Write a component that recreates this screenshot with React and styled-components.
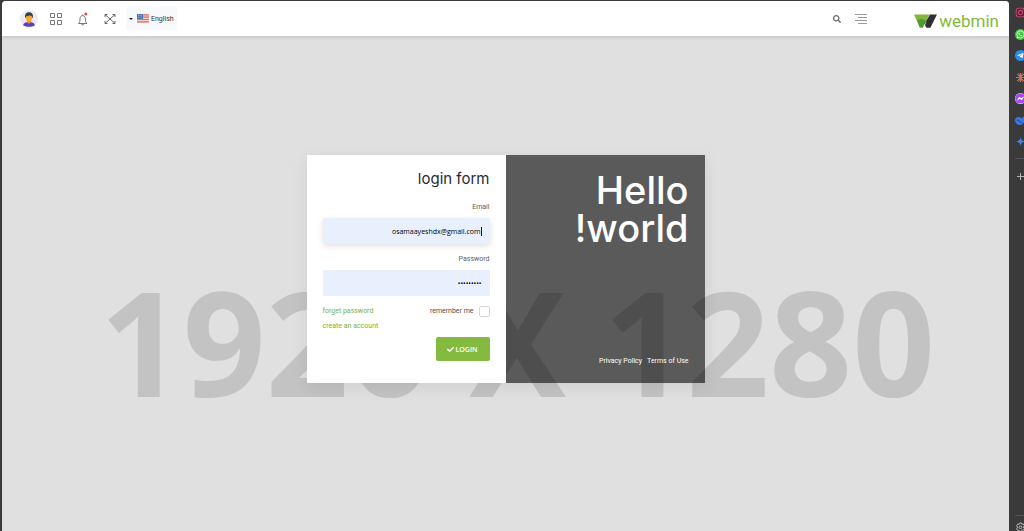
import React from "react";
import styled, { createGlobalStyle } from "styled-components";
import { FaSearch, FaCheck, FaWhatsapp, FaTelegramPlane, FaInstagram, FaFacebookMessenger } from "react-icons/fa";

const compact = "Roboto, sans-serif";

const GlobalStyle = createGlobalStyle`
  *, *::before, *::after { box-sizing: border-box; }
  body { margin: 0; background: #3a3a3a; font-family: "Open Sans", "Noto Sans", sans-serif; }
  button, input { font-family: inherit; }
  a { text-decoration: none; }
`;

const Frame = styled.div`
  display: flex;
  min-height: 100vh;
  padding: 1px 0 0 2px;
  overflow: hidden;
`;

const Page = styled.div`
  flex: 1;
  min-width: 0;
  display: flex;
  flex-direction: column;
  border-radius: 4px 4px 0 0;
  overflow: hidden;
  background: #e0e0e0;
`;

const Header = styled.header`
  display: flex;
  align-items: center;
  justify-content: space-between;
  height: 35px;
  padding: 0 10px 0 18px;
  background: #fff;
  box-shadow: 0 1px 4px rgba(0, 0, 0, 0.16);
  z-index: 1;
`;

const Group = styled.div`
  display: flex;
  align-items: center;
  gap: ${(p) => p.$gap}px;
`;

const IconButton = styled.button`
  display: flex;
  align-items: center;
  justify-content: center;
  width: ${(p) => p.$size || 12}px;
  height: 18px;
  padding: 0;
  border: 0;
  background: none;
  color: #666;
`;

const LanguageButton = styled.button`
  display: flex;
  align-items: center;
  gap: 2px;
  height: 23px;
  padding: 0 3px;
  border: 0;
  background: #f8f9fa;
  color: #333;
  font-family: ${compact};
  font-size: 7px;
`;

const Caret = styled.span`
  margin-right: 2px;
  border: 2px solid transparent;
  border-top-color: #222;
  border-bottom: 0;
`;

const Brand = styled.a`
  display: flex;
  align-items: center;
  gap: 2px;
  margin-left: 47px;
  padding-top: 4px;
  color: #7fba3c;
  font-family: ${compact};
  font-size: 17px;
  line-height: 20px;
`;

const Stage = styled.main`
  flex: 1;
  display: grid;
  grid-template-columns: 1fr;
  justify-items: center;
  align-items: start;
  padding-top: 119px;
`;

const Watermark = styled.div`
  grid-area: 1 / 1;
  margin-top: 86px;
  padding-left: 24px;
  color: #c3c3c3;
  font-size: 145px;
  font-weight: 700;
  line-height: 200px;
  white-space: nowrap;
`;

const Card = styled.section`
  grid-area: 1 / 1;
  display: grid;
  grid-template-columns: 1fr 1fr;
  width: 100%;
  max-width: 398px;
  box-shadow: 0 4px 16px rgba(0, 0, 0, 0.08);
  z-index: 1;
`;

const Form = styled.form`
  display: flex;
  flex-direction: column;
  padding: 12px 16px 22px;
  background: #fff;
`;

const Title = styled.h1`
  margin: 0 0 9px;
  color: #272b35;
  font-family: Inter, sans-serif;
  font-size: 15px;
  font-weight: 400;
  line-height: 24px;
  text-align: right;
`;

const Label = styled.label`
  margin-bottom: 4px;
  color: #5b6068;
  font-family: ${compact};
  font-size: 7px;
  line-height: 14px;
  text-align: right;
`;

const Field = styled.div`
  display: flex;
  align-items: center;
  height: 26px;
  margin-bottom: 8px;
  padding-right: 8px;
  border-radius: 1px;
  background: #e8f0fe;
  box-shadow: ${(p) => (p.$focused ? "0 2px 6px rgba(0, 0, 0, 0.12)" : "none")};
`;

const Input = styled.input`
  flex: 1;
  min-width: 0;
  padding: 0;
  border: 0;
  outline: 0;
  background: none;
  color: #000;
  font-size: 7px;
  font-weight: 500;
  text-align: right;
`;

const TextCursor = styled.span`
  width: 1px;
  height: 9px;
  background: #111;
`;

const Options = styled.div`
  display: flex;
  justify-content: space-between;
  align-items: flex-start;
`;

const Links = styled.div`
  display: flex;
  flex-direction: column;
`;

const FormLink = styled.a`
  color: #7cb236;
  font-family: ${compact};
  font-size: 7px;
  line-height: 15px;
`;

const Remember = styled.label`
  display: flex;
  align-items: center;
  gap: 5px;
  color: #4c5158;
  font-family: ${compact};
  font-size: 7px;
  line-height: 15px;
`;

const Checkbox = styled.input`
  appearance: none;
  width: 11px;
  height: 11px;
  margin: 0;
  border: 1px solid #d3d6da;
  border-radius: 2px;
  background: #fff;
`;

const LoginButton = styled.button`
  align-self: flex-end;
  display: flex;
  align-items: center;
  justify-content: center;
  gap: 1px;
  width: 54px;
  height: 24px;
  margin-top: 3px;
  padding: 0;
  border: 0;
  border-radius: 2px;
  background: #84ba3f;
  color: #fff;
  font-size: 7px;
  font-weight: 600;
`;

const Panel = styled.div`
  display: flex;
  flex-direction: column;
  justify-content: space-between;
  padding: 16px 16px 14px;
  background: rgba(0, 0, 0, 0.6);
  color: #fff;
  text-align: right;
`;

const Hello = styled.h2`
  margin: 0;
  font-family: Inter, sans-serif;
  font-size: 38px;
  font-weight: 500;
  line-height: 38px;
`;

const Legal = styled.nav`
  display: flex;
  justify-content: flex-end;
  gap: 5px;
`;

const LegalLink = styled.a`
  color: #fff;
  font-family: ${compact};
  font-size: 7px;
  line-height: 15px;
`;

const Sidebar = styled.aside`
  display: flex;
  flex-direction: column;
  width: 15px;
  padding: 6px 0 0 6px;
  overflow: hidden;
  color: #bbb;
`;

const Apps = styled.div`
  display: flex;
  flex-direction: column;
  justify-content: space-between;
  height: 140px;
`;

const AppButton = styled.button`
  display: flex;
  align-items: center;
  justify-content: center;
  width: 11px;
  height: 11px;
  padding: 0;
  border: 0;
  border-radius: ${(p) => p.$radius || "50%"};
  background: ${(p) => p.$bg || "none"};
  color: ${(p) => p.$color || "#fff"};
`;

const Divider = styled.hr`
  width: 100%;
  margin: 11px 0 12px;
  border: 0;
  border-top: 1px solid #555;
`;

const Bottom = styled.div`
  margin-top: auto;
  height: 16px;
  overflow: hidden;
  border-top: 1px solid #555;
  padding-top: 6px;
`;

const Avatar = () => (
  <svg width="18" height="18" viewBox="0 0 18 18">
    <circle cx="9" cy="9" r="9" fill="#e9ecf1" />
    <path d="M3.500 15.500c0-2.500 2-3.500 5.500-3.500s5.500 1 5.500 3.500c-3 1.800-8 1.800-11 0z" fill="#5546b8" />
    <path d="M3.500 15.500c0-1 .3-2 1-2.500l1 3zM14.500 15.500c0-1-.3-2-1-2.500l-1 3z" fill="#9a1be0" />
    <path d="M7.300 9.500h3.400v3L9 14l-1.700-1.500z" fill="#e98b21" />
    <ellipse cx="9" cy="8" rx="3" ry="3.500" fill="#f8a72c" />
    <path d="M5.300 8.500C4.400 4.500 6 2.300 9 2.300s4.600 2.200 3.700 6.200L11.500 6 9.500 5.200 8 6.200 6.400 6z" fill="#343d4c" />
  </svg>
);

const GridIcon = () => (
  <svg width="12" height="12" viewBox="0 0 12 12" fill="none" stroke="#777">
    <path d="M.5.5h4v4h-4zM7.500.5h4v4h-4zM.5 7.500h4v4h-4zM7.500 7.500h4v4h-4z" />
  </svg>
);

const BellIcon = () => (
  <svg width="12" height="14" viewBox="0 0 12 14" fill="none" stroke="#666" strokeWidth="0.900">
    <path d="M1.500 11.500c1.300-1 1.500-2 1.500-4.500 0-2 1-3.300 2.700-3.300S8.400 5 8.400 7c0 2.500.3 3.500 1.600 4.500zM4.500 12c.2 1.200 2.200 1.200 2.400 0M5.700 3.700V2.500" />
    <circle cx="8.800" cy="2" r="1.500" fill="#df4a45" stroke="none" />
  </svg>
);

const ExpandIcon = () => (
  <svg width="12" height="12" viewBox="0 0 12 12" fill="none" stroke="#555" strokeWidth="0.900">
    <path d="M1 1.500l10 9M11 1.500l-10 9M1 4V1.500h2.500M8.500 1.500H11V4M1 8v2.500h2.500M8.500 10.500H11V8" />
  </svg>
);

const Flag = () => (
  <svg width="12" height="9" viewBox="0 0 12 9">
    <rect width="12" height="9" rx="1" fill="#f3cdca" />
    <path d="M0 .8h12M0 3.100h12M0 5.500h12M0 7.900h12" stroke="#da7770" strokeWidth="1.200" />
    <rect width="6" height="5" fill="#5276ae" />
    <path d="M1 1.500h4M1 3.300h4" stroke="#bccce5" strokeWidth="0.600" strokeDasharray="1 .7" />
  </svg>
);

const MenuIcon = () => (
  <svg width="12" height="10" viewBox="0 0 12 10" stroke="#999">
    <path d="M0 .5h12M3 3.500h9M0 6.500h12M3 9.500h9" />
  </svg>
);

const BrandMark = () => (
  <svg width="23" height="14" viewBox="0 0 23 14">
    <path d="M0 .5h15.500L11.800 7l-3 6.500h-3z" fill="#80b83d" />
    <path d="M3 6l5-1 4 2-3.200 6.500h-3z" fill="#4e9b2f" />
    <path d="M16 .5h7l-6.500 13h-4L10.500 9.500z" fill="#303030" />
    <path d="M12.500 7l-2.700 5 .9 1.500h1.800z" fill="#fff" />
    <path d="M13 7l3.500 6.500h-4.300L11 11z" fill="#303030" />
  </svg>
);

const Burst = () => (
  <svg width="11" height="11" viewBox="0 0 11 11" stroke="#dc6b50" strokeWidth="1">
    <path d="M5.500 1v9M1 5.500h9M2 2l7 7M9 2L2 9M3.500 1.200l4 8.600M7.500 1.200l-4 8.600" />
  </svg>
);

const Whale = () => (
  <svg width="11" height="11" viewBox="0 0 11 11">
    <path d="M0 5c0-2 2-3.500 4-3 2 .5 2.500 1 3 2 .5-.7.700-1.500.7-2.500C9 2.500 10 2 11 2.500c0 2.500-.7 3.500-1.700 4C8.500 8.500 6.500 10 4.500 10 2 10 0 7.500 0 5z" fill="#3978e6" />
    <path d="M2 5c2 0 3 1.500 4.500 3.200" stroke="#263b62" fill="none" />
  </svg>
);

const Spark = () => (
  <svg width="11" height="11" viewBox="0 0 11 11">
    <path d="M5.500 1c.5 3 1.500 4 4.500 4.500C7 6 6 7 5.500 10 5 7 4 6 1 5.500 4 5 5 4 5.500 1z" fill="#4385ed" />
  </svg>
);

const Plus = () => (
  <svg width="9" height="9" viewBox="0 0 9 9" stroke="#b5b5b5">
    <path d="M4.500 1v7M1 4.500h7" />
  </svg>
);

const Gear = () => (
  <svg width="11" height="11" viewBox="0 0 11 11" fill="none" stroke="#bbb">
    <path d="M4.500 1h2l.4 1.300 1.400-.3 1.100 1.700-1 1.300 1 1.800-1 1.500-1.500-.2-.4 1.400h-2l-.4-1.400-1.500.2-1-1.500 1-1.800-1-1.300L2.700 2l1.400.3z" />
    <circle cx="5.500" cy="5.300" r="1.400" />
  </svg>
);

export default function App() {
  return (
    <>
      <GlobalStyle />
      <Frame>
        <Page>
          <Header>
            <Group $gap={12}>
              <IconButton $size={18} aria-label="Profile"><Avatar /></IconButton>
              <Group $gap={10}>
                <Group $gap={15}>
                  <IconButton aria-label="Apps"><GridIcon /></IconButton>
                  <IconButton aria-label="Notifications"><BellIcon /></IconButton>
                  <IconButton aria-label="Full screen"><ExpandIcon /></IconButton>
                </Group>
                <LanguageButton><Caret /><Flag />English</LanguageButton>
              </Group>
            </Group>
            <Group $gap={0}>
              <Group $gap={12}>
                <IconButton aria-label="Search"><FaSearch size={8} /></IconButton>
                <IconButton aria-label="Menu"><MenuIcon /></IconButton>
              </Group>
              <Brand href="#"><BrandMark />webmin</Brand>
            </Group>
          </Header>
          <Stage>
            <Watermark aria-hidden="true">1920 X 1280</Watermark>
            <Card>
              <Form onSubmit={(e) => e.preventDefault()}>
                <Title>login form</Title>
                <Label htmlFor="email">Email</Label>
                <Field $focused>
                  <Input id="email" type="email" defaultValue="osamaayeshdx@gmail.com" />
                  <TextCursor />
                </Field>
                <Label htmlFor="password">Password</Label>
                <Field>
                  <Input id="password" type="password" defaultValue="123456789" />
                </Field>
                <Options>
                  <Links>
                    <FormLink href="#">forget password</FormLink>
                    <FormLink href="#">create an account</FormLink>
                  </Links>
                  <Remember>remember me<Checkbox type="checkbox" /></Remember>
                </Options>
                <LoginButton type="submit"><FaCheck size={7} />LOGIN</LoginButton>
              </Form>
              <Panel>
                <Hello>Hello<br />!world</Hello>
                <Legal>
                  <LegalLink href="#">Privacy Policy</LegalLink>
                  <LegalLink href="#">Terms of Use</LegalLink>
                </Legal>
              </Panel>
            </Card>
          </Stage>
        </Page>
        <Sidebar>
          <Apps>
            <AppButton aria-label="Instagram" $color="#e04a6c" $radius="3px" $bg="#4a2a4c"><FaInstagram size={11} /></AppButton>
            <AppButton aria-label="WhatsApp" $bg="#48c343"><FaWhatsapp size={9} /></AppButton>
            <AppButton aria-label="Telegram" $bg="#2d8ee5"><FaTelegramPlane size={7} /></AppButton>
            <AppButton aria-label="Claude"><Burst /></AppButton>
            <AppButton aria-label="Messenger" $color="#a44bf0" $bg="#fff"><FaFacebookMessenger size={11} /></AppButton>
            <AppButton aria-label="DeepSeek"><Whale /></AppButton>
            <AppButton aria-label="Gemini"><Spark /></AppButton>
          </Apps>
          <Divider />
          <AppButton aria-label="Add"><Plus /></AppButton>
          <Bottom><AppButton aria-label="Settings"><Gear /></AppButton></Bottom>
        </Sidebar>
      </Frame>
    </>
  );
}
